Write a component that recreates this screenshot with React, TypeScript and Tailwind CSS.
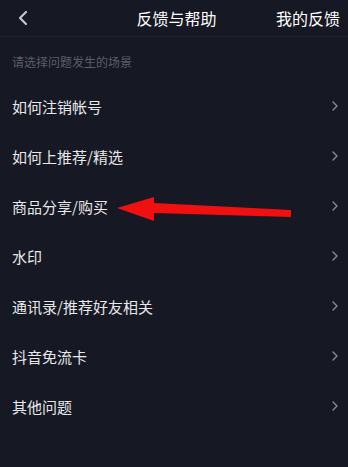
import { ChevronLeft } from 'lucide-react'

const items = [
  '如何注销帐号',
  '如何上推荐/精选',
  '商品分享/购买',
  '水印',
  '通讯录/推荐好友相关',
  '抖音免流卡',
  '其他问题',
]

const font = { fontFamily: '"Noto Sans CJK SC", "Noto Sans", sans-serif' }

export default function App() {
  return (
    <div className="relative w-[348px] h-[467px] bg-[#161823] overflow-hidden" style={font}>
      {/* Header */}
      <div className="flex items-center h-[37px] border-b border-[#22242f] px-3">
        <ChevronLeft className="h-6 w-6 text-[#c4c5c9] -ml-[1px]" strokeWidth={2.2} />
        <div className="flex-1 text-center text-[16px] text-white pl-[42px] leading-none">反馈与帮助</div>
        <div className="text-[16px] text-white leading-none -mr-[4px]">我的反馈</div>
      </div>

      <div className="px-3 pt-[19px] text-[12px] text-[#5c5e68] leading-none">请选择问题发生的场景</div>

      <div className="mt-[13px]">
        {items.map(t => (
          <div key={t} className="flex items-center justify-between h-[50px] pl-3 pr-[10px]">
            <span className="text-[15px] text-[#e8e8ea] leading-none">{t}</span>
            <svg width="6" height="10" viewBox="0 0 6 10" fill="none">
              <path d="M1 1l4 4-4 4" stroke="#8a8b92" strokeWidth="1.4" strokeLinecap="round" strokeLinejoin="round" />
            </svg>
          </div>
        ))}
      </div>

      {/* red annotation arrow */}
      <svg className="absolute left-0 top-0 pointer-events-none" width="348" height="467">
        <polygon points="117,208 154,197 154,203 291,210 291,217 154,213 154,221" fill="#f01010" />
      </svg>
    </div>
  )
}
